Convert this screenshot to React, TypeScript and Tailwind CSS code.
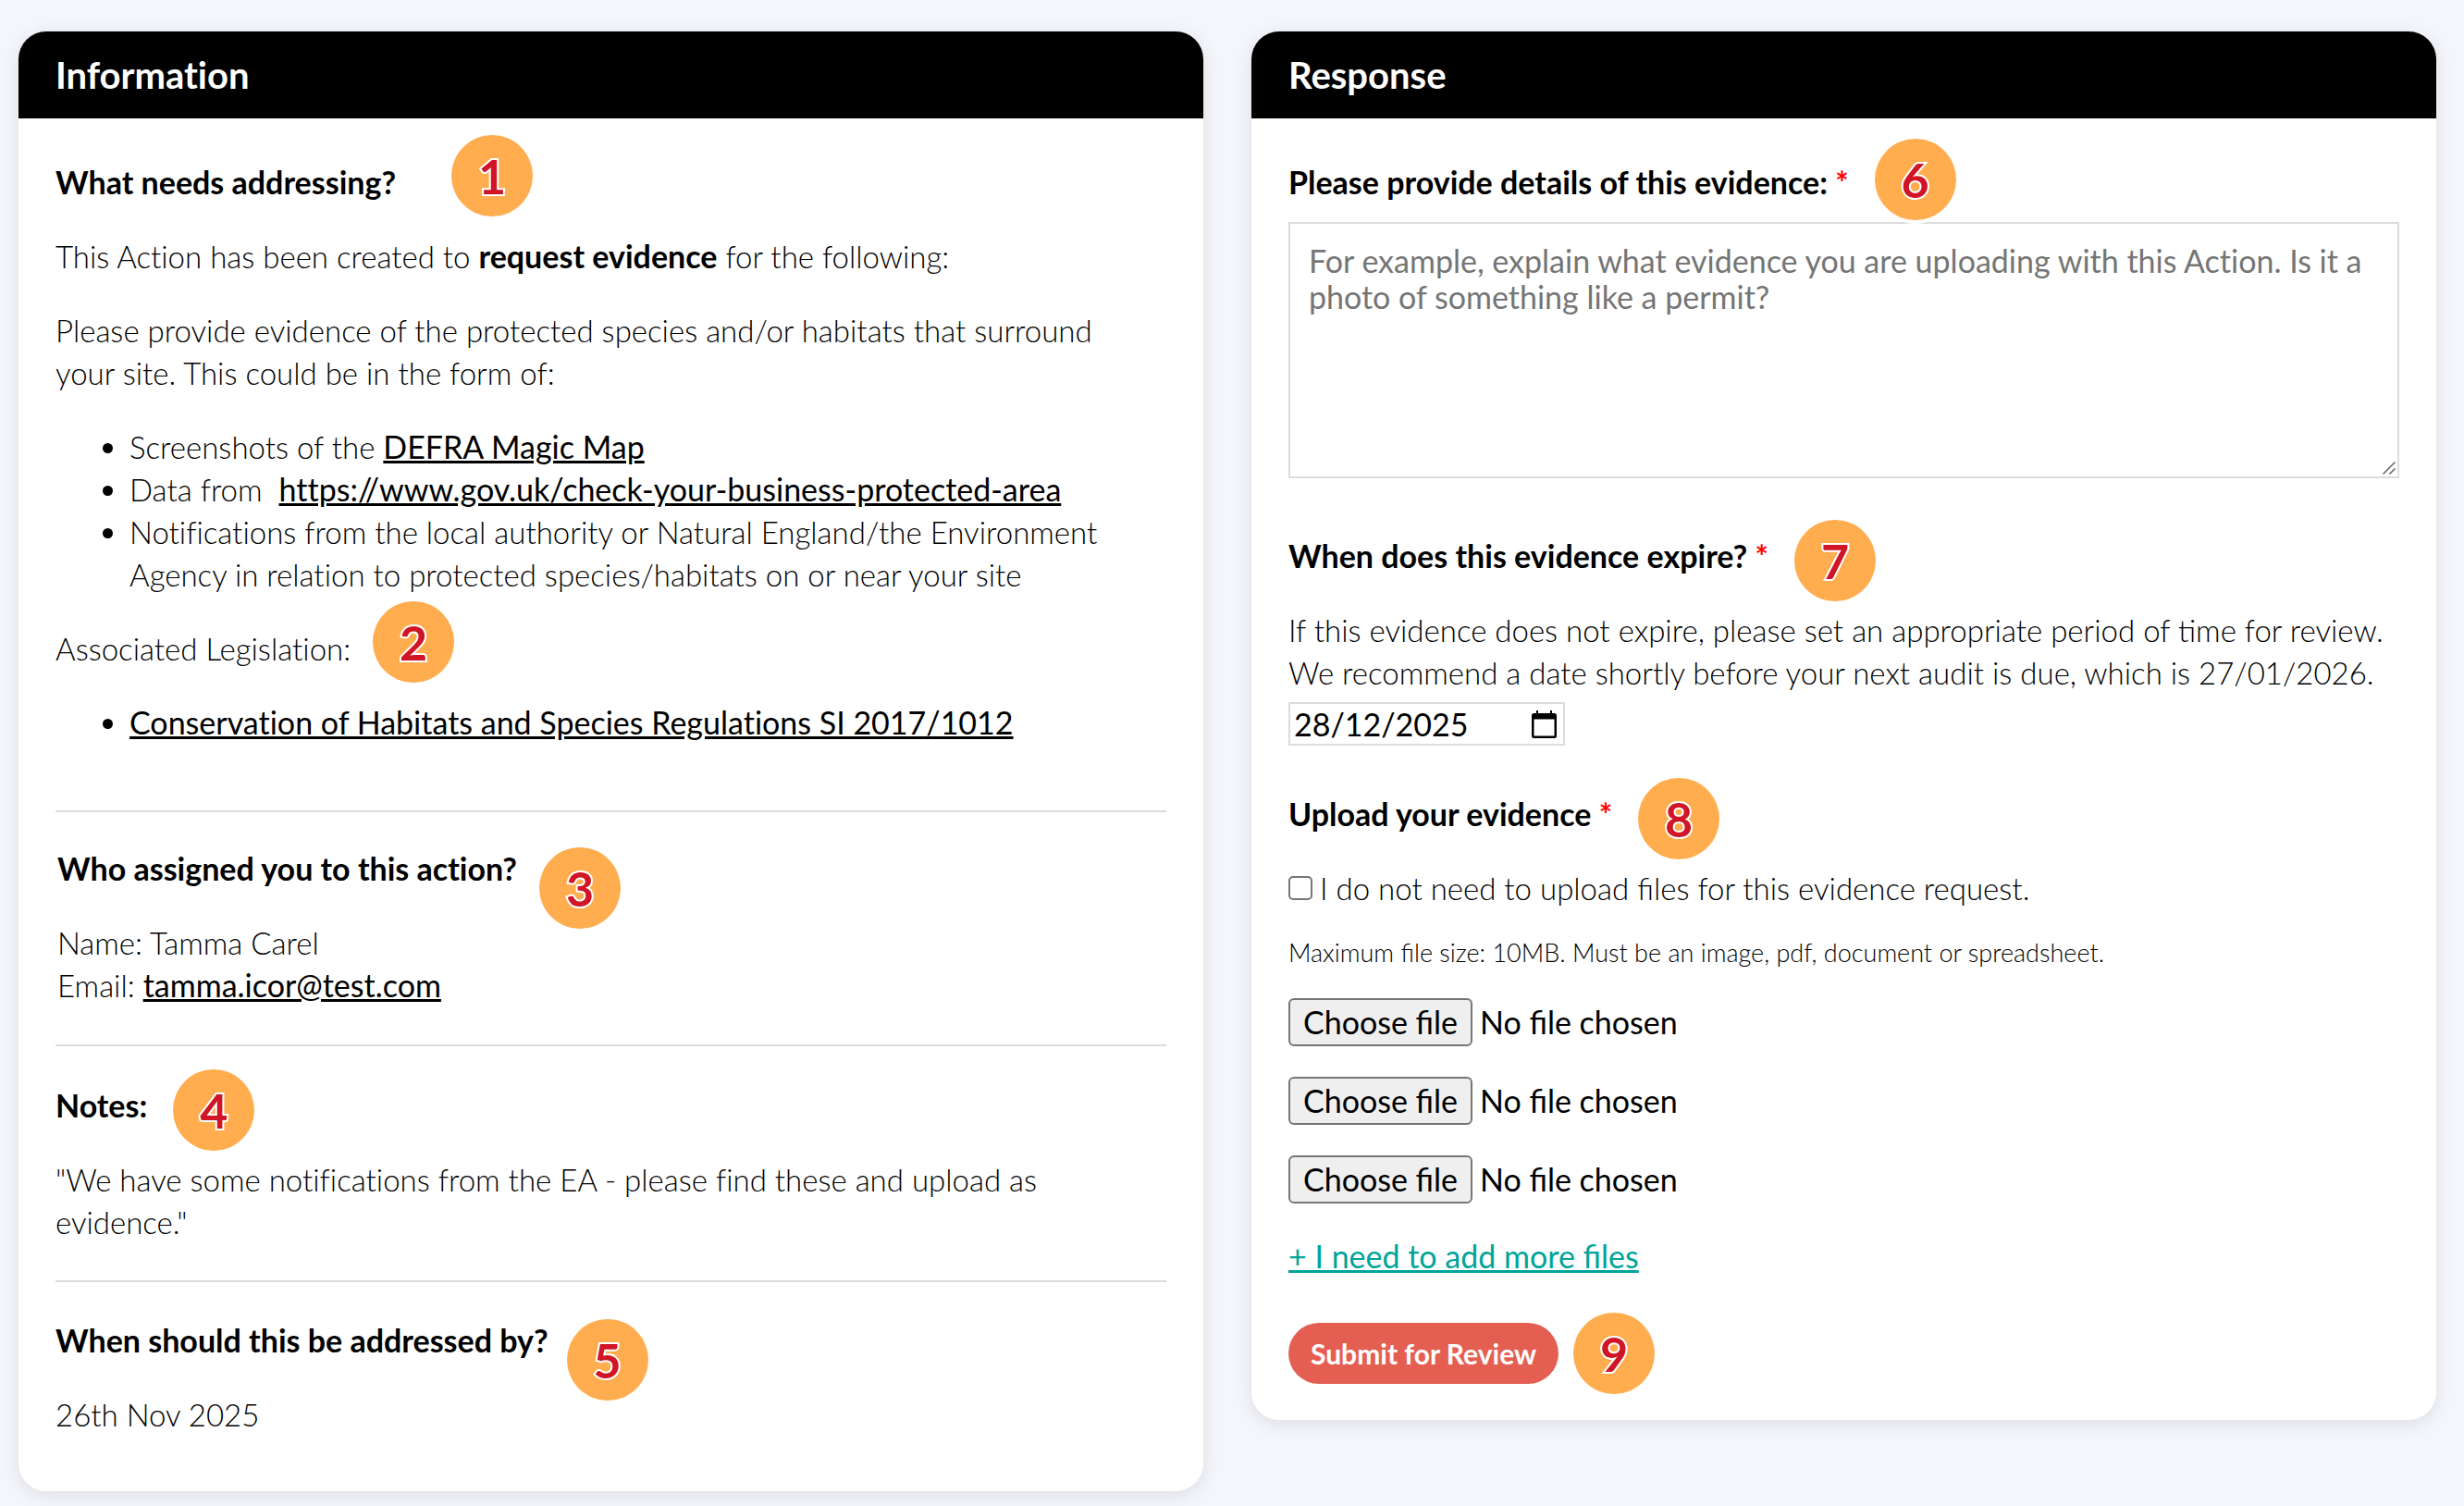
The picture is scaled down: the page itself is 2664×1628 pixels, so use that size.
import type { ReactNode } from 'react';

type BadgeProps = {
  n: number;
  className?: string;
};

const Badge = ({ n, className = '' }: BadgeProps) => (
  <span
    className={`flex size-22 items-center justify-center rounded-full bg-[#ffad4f] text-[52px] leading-none font-bold text-[#cf1526] ring-4 ring-white [-webkit-text-stroke:4px_white] [paint-order:stroke_fill] ${className}`}
  >
    {n}
  </span>
);

const Card = ({ title, children }: { title: string; children: ReactNode }) => (
  <section className="overflow-hidden rounded-[30px] bg-white shadow-[0_4px_20px_rgba(0,0,0,0.1)]">
    <h2 className="bg-black px-10 py-6 text-[40px] leading-[46px] font-bold text-white [font-variant-ligatures:no-common-ligatures]">
      {title}
    </h2>
    {children}
  </section>
);

const Required = () => <span className="text-[#ff0000]">*</span>;

const FileRow = ({ id }: { id: string }) => (
  <div className="relative flex items-center gap-2 text-[34px] font-normal">
    <input id={id} type="file" className="peer sr-only" />
    <label
      htmlFor={id}
      className="rounded-md border-2 border-[#767676] bg-[#efefef] px-[14px] py-0.5 leading-[44px] peer-focus-visible:outline-2"
    >
      Choose file
    </label>
    <span>No file chosen</span>
  </div>
);

const Information = () => (
  <Card title="Information">
    <div className="px-10 pt-[46px] pb-15 [font-variant-ligatures:no-common-ligatures]">
      <div className="flex flex-col gap-[34px]">
        <h3 className="relative w-fit text-[34px] font-bold">
          What needs addressing?
          <Badge n={1} className="absolute -top-7 left-full ml-15" />
        </h3>
        <p>
          This Action has been created to <strong className="text-[34px] font-bold">request evidence</strong> for the
          following:
        </p>
        <p>
          Please provide evidence of the protected species and/or habitats that surround
          <br />
          your site. This could be in the form of:
        </p>
        <ul className="list-disc pl-20">
          <li>
            Screenshots of the{' '}
            <a href="#magic-map" className="text-[34px] font-normal underline">
              DEFRA Magic Map
            </a>
          </li>
          <li>
            Data from&nbsp;{' '}
            <a href="#protected-area" className="text-[34px] font-normal underline">
              https://www.gov.uk/check-your-business-protected-area
            </a>
          </li>
          <li>
            Notifications from the local authority or Natural England/the Environment Agency in relation to protected
            species/habitats on or near your site
          </li>
        </ul>
        <p className="relative w-fit">
          Associated Legislation:
          <Badge n={2} className="absolute -top-7 left-full ml-6" />
        </p>
        <ul className="list-disc pl-20">
          <li>
            <a href="#legislation" className="text-[34px] font-normal underline">
              Conservation of Habitats and Species Regulations SI 2017/1012
            </a>
          </li>
        </ul>
      </div>

      <hr className="mt-[72px] mb-[38px] border-t-2 border-[#dcdcdc]" />

      <div className="flex flex-col gap-[34px] px-0.5">
        <h3 className="relative w-fit text-[34px] font-bold">
          Who assigned you to this action?
          <Badge n={3} className="absolute top-0 left-full ml-6" />
        </h3>
        <p>
          Name: Tamma Carel
          <br />
          Email:{' '}
          <a href="mailto:tamma.icor@test.com" className="text-[34px] font-normal underline">
            tamma.icor@test.com
          </a>
        </p>
      </div>

      <hr className="my-[41px] border-t-2 border-[#dcdcdc]" />

      <div className="flex flex-col gap-[34px]">
        <h3 className="relative w-fit text-[34px] font-bold">
          Notes:
          <Badge n={4} className="absolute -top-4 left-full ml-7" />
        </h3>
        <p>"We have some notifications from the EA - please find these and upload as evidence."</p>
      </div>

      <hr className="my-10 border-t-2 border-[#dcdcdc]" />

      <div className="flex flex-col gap-[34px]">
        <h3 className="relative w-fit text-[34px] font-bold">
          When should this be addressed by?
          <Badge n={5} className="absolute top-0 left-full ml-5" />
        </h3>
        <p>26th Nov 2025</p>
      </div>
    </div>
  </Card>
);

const Response = () => (
  <Card title="Response">
    <form className="px-10 pt-[46px] pb-7" onSubmit={(e) => e.preventDefault()}>
      <div className="relative z-10 w-fit text-[34px] font-bold">
        <label htmlFor="details">
          Please provide details of this evidence: <Required />
        </label>
        <Badge n={6} className="absolute -top-6 left-full ml-7" />
      </div>
      <div className="relative mt-5">
        <textarea
          id="details"
          placeholder="For example, explain what evidence you are uploading with this Action. Is it a photo of something like a permit?"
          className="block h-[277px] w-full resize-none border-2 border-[#dcdcdc] p-5 text-[34px] leading-[39px] font-normal [font-variant-ligatures:no-common-ligatures] placeholder:text-[#757575]"
        />
        <svg viewBox="0 0 14 14" className="absolute right-1 bottom-1 size-[14px]" fill="none" stroke="#666" strokeWidth="1.5">
          <path d="M0.5 13.5 13.5 0.5M7.5 13.5 13.5 7.5" />
        </svg>
      </div>

      <div className="relative mt-[61px] w-fit text-[34px] font-bold">
        <label htmlFor="expiry">
          When does this evidence expire? <Required />
        </label>
        <Badge n={7} className="absolute -top-4 left-full ml-7" />
      </div>
      <p className="mt-[34px]">
        If this evidence does not expire, please set an appropriate period of time for review. We recommend a date
        shortly before your next audit is due, which is 27/01/2026.
      </p>
      <div className="mt-[9px] flex h-[47px] w-[299px] items-center border-2 border-[#dcdcdc] pr-[7px] pl-1">
        <input id="expiry" type="text" defaultValue="28/12/2025" className="min-w-0 flex-1 text-[34px] font-normal" />
        <button type="button" aria-label="Pick a date">
          <svg viewBox="0 0 27 30" className="h-[30px] w-[27px]">
            <path
              fillRule="evenodd"
              d="M5 0h2v3h13V0h2v3h2.500a2.500 2.500 0 0 1 2.500 2.500v22a2.500 2.500 0 0 1-2.500 2.500h-22A2.500 2.500 0 0 1 0 27.500v-22A2.500 2.500 0 0 1 2.500 3H5zM2.500 9.500v18h22v-18z"
            />
          </svg>
        </button>
      </div>

      <h3 className="relative mt-[51px] w-fit text-[34px] font-bold">
        Upload your evidence <Required />
        <Badge n={8} className="absolute -top-4 left-full ml-7" />
      </h3>
      <div className="mt-[34px] flex items-center gap-2">
        <input id="no-files" type="checkbox" className="size-[26px] appearance-none rounded-[5px] border-2 border-[#767676] checked:bg-[#0075ff]" />
        <label htmlFor="no-files">I do not need to upload files for this evidence request.</label>
      </div>
      <p className="mt-6 text-[27px]">Maximum file size: 10MB. Must be an image, pdf, document or spreadsheet.</p>

      <div className="mt-[26px] flex flex-col gap-[33px]">
        <FileRow id="file-1" />
        <FileRow id="file-2" />
        <FileRow id="file-3" />
      </div>

      <a href="#more-files" className="mt-[34px] block w-fit text-[34px] font-normal text-[#00a499] underline">
        + I need to add more files
      </a>

      <div className="mt-[38px] flex items-center gap-4">
        <button type="submit" className="rounded-full bg-[#e45f52] px-6 py-[10px] text-[30px] leading-[46px] font-bold text-white">
          Submit for Review
        </button>
        <Badge n={9} />
      </div>
    </form>
  </Card>
);

const App = () => {
  return (
    <main className="grid min-h-screen grid-cols-2 items-start gap-[52px] bg-[#f4f6fb] pt-[34px] pr-[30px] pb-4 pl-5 font-['Lato',sans-serif] text-[33px] leading-[46px] font-light text-black">
      <Information />
      <Response />
    </main>
  );
};

export default App;
